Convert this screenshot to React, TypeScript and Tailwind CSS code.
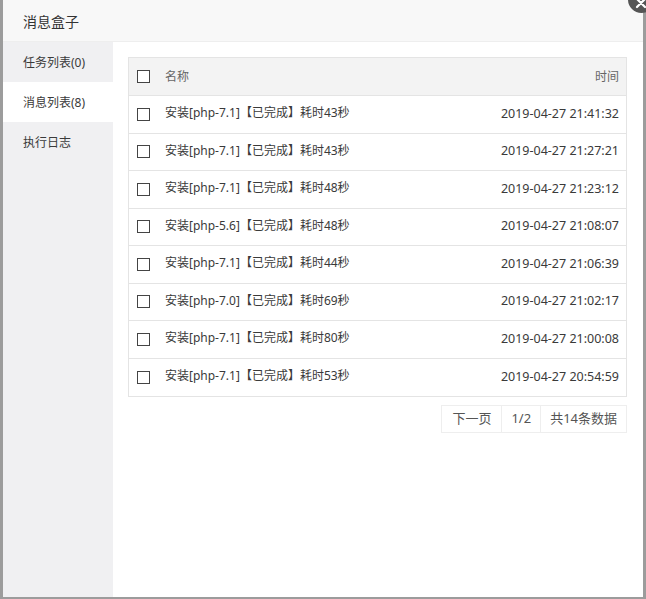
import React from "react";

const rows = [
  ["安装[php-7.1]【已完成】耗时43秒", "2019-04-27 21:41:32"],
  ["安装[php-7.1]【已完成】耗时43秒", "2019-04-27 21:27:21"],
  ["安装[php-7.1]【已完成】耗时48秒", "2019-04-27 21:23:12"],
  ["安装[php-5.6]【已完成】耗时48秒", "2019-04-27 21:08:07"],
  ["安装[php-7.1]【已完成】耗时44秒", "2019-04-27 21:06:39"],
  ["安装[php-7.0]【已完成】耗时69秒", "2019-04-27 21:02:17"],
  ["安装[php-7.1]【已完成】耗时80秒", "2019-04-27 21:00:08"],
  ["安装[php-7.1]【已完成】耗时53秒", "2019-04-27 20:54:59"],
];

function Box() {
  return <span className="block w-[13px] h-[13px] border border-[#444] bg-white shrink-0" />;
}

export default function App() {
  return (
    <div
      className="relative w-[646px] h-[599px] overflow-hidden bg-[#9c9c9c]"
      style={{ fontFamily: '"Noto Sans", "Noto Sans CJK SC", sans-serif' }}
    >
      <div className="ml-[3px] w-[640px] h-[597px] bg-white flex flex-col">
        <div className="h-[42px] shrink-0 bg-[#f8f8f8] border-b border-[#eeeeee] flex items-center pl-[20px] pt-[1px] text-[14px] text-[#333]">
          消息盒子
        </div>
        <div className="flex flex-1 min-h-0">
          <div className="w-[110px] shrink-0 bg-[#f0f0f2] text-[12px] text-[#3a3a3a]">
            <div className="h-10 flex items-center pl-[20px] pt-[1px]">任务列表(0)</div>
            <div className="h-10 flex items-center pl-[20px] pt-[1px] bg-white">消息列表(8)</div>
            <div className="h-10 flex items-center pl-[20px] pt-[1px]">执行日志</div>
          </div>
          <div className="flex-1 pl-[15px] pr-[16px] pt-[15px]">
            <div className="border border-[#e4e4e4] text-[12px]">
              <div className="h-[38px] bg-[#f3f3f3] flex items-center pl-[8px] pr-[7px] text-[#666] border-b border-[#e4e4e4]">
                <Box />
                <span className="ml-[15px] flex-1">名称</span>
                <span>时间</span>
              </div>
              {rows.map(([name, time], i) => (
                <div
                  key={i}
                  className={`h-[37.5px] flex items-center pl-[8px] pr-[7px] text-[#3a3a3a] ${i < rows.length - 1 ? "border-b border-[#e4e4e4]" : ""}`}
                >
                  <Box />
                  <span className="ml-[15px] flex-1 -translate-y-[1px]">{name}</span>
                  <span className="text-[12.5px]">{time}</span>
                </div>
              ))}
            </div>
            <div className="flex justify-end mt-[8px] text-[13px] text-[#555]">
              <span className="h-[28px] px-[10px] flex items-center border border-[#eeeeee]">下一页</span>
              <span className="h-[28px] px-[9px] flex items-center border border-[#eeeeee] -ml-px">1/2</span>
              <span className="h-[28px] px-[9px] flex items-center border border-[#eeeeee] -ml-px">共14条数据</span>
            </div>
          </div>
        </div>
      </div>
      <div className="absolute left-[628px] top-[-14px] w-[27px] h-[27px] rounded-full bg-[#555] flex items-center justify-center">
        <svg width="14" height="14" viewBox="0 0 14 14" className="mt-[6px] -ml-[2px]">
          <path d="M3 3L11 11M11 3L3 11" stroke="white" strokeWidth="2.2" strokeLinecap="round" />
        </svg>
      </div>
    </div>
  );
}
